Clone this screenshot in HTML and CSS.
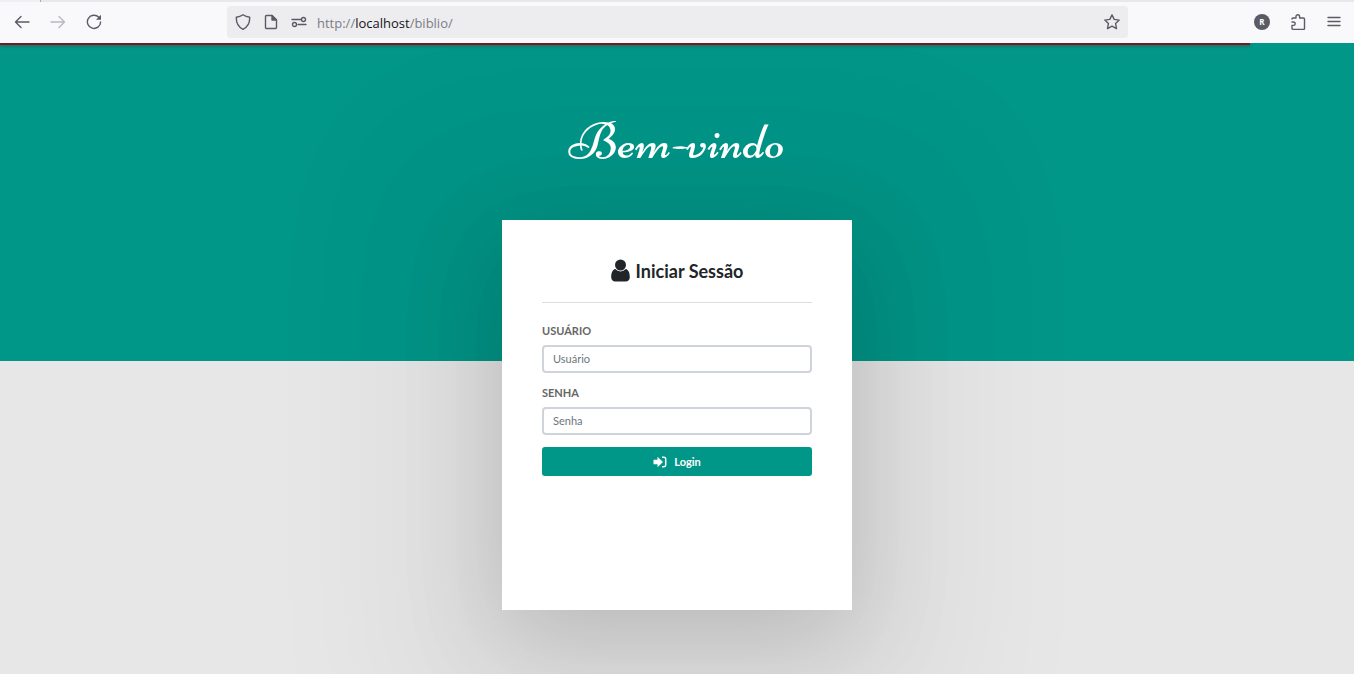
FILE: index.html
```html
<!DOCTYPE html>
<html lang="pt">
<head>
  <meta charset="UTF-8">
  <meta name="viewport" content="width=device-width, initial-scale=1">
  <title>Biblio - Login</title>
  <link rel="stylesheet" href="styles.css">
</head>
<body>
  <header class="browser">
    <div class="tab-edge"></div>
    <div class="toolbar">
      <nav class="nav-buttons">
        <button type="button" aria-label="Voltar">
          <svg viewBox="0 0 16 16"><path d="M15 8H1.5M7 2.5L1.5 8L7 13.5"/></svg>
        </button>
        <button type="button" class="off" aria-label="Avançar">
          <svg viewBox="0 0 16 16"><path d="M1 8h13.500M9 2.500L14.500 8L9 13.500"/></svg>
        </button>
        <button type="button" aria-label="Recarregar">
          <svg viewBox="0 0 16 16"><path d="M12.800 3.300A6.600 6.600 0 1 0 14.600 8"/><path class="tip" d="M15 .8v5h-5z"/></svg>
        </button>
      </nav>
      <div class="url-bar">
        <svg viewBox="0 0 16 16"><path d="M8 .8C6.300 2 3.900 3 1.300 3.300C1.100 8.500 3 13 8 15.300C13 13 14.900 8.500 14.700 3.300C12.100 3 9.700 2 8 .8z"/></svg>
        <svg viewBox="0 0 16 16"><path d="M3.500 1.500H9L13.500 6v7.500a1 1 0 0 1-1 1h-9a1 1 0 0 1-1-1v-11a1 1 0 0 1 1-1z"/><path class="fill" d="M9 1.500V6h4.500z"/></svg>
        <svg viewBox="0 0 16 16"><path d="M1 5.500h9M7 10.500h8"/><circle cx="12.500" cy="5.500" r="2"/><circle cx="3.500" cy="10.500" r="2"/></svg>
        <span class="url">http://<b>localhost</b>/biblio/</span>
        <svg class="star" viewBox="0 0 16 16"><path d="M8 .9l2.200 4.500l5 .7l-3.600 3.500l.9 5L8 12.200l-4.500 2.400l.9-5L.8 6.100l5-.7z"/></svg>
      </div>
      <div class="tools">
        <span class="account">R</span>
        <button type="button" aria-label="Extensões">
          <svg viewBox="0 0 16 16"><path d="M2 5a1 1 0 0 1 1-1h3V2.600a1.800 1.800 0 0 1 3.600 0V4h3.900a1 1 0 0 1 1 1v9.400a1 1 0 0 1-1 1H3a1 1 0 0 1-1-1v-3h1.500a1.700 1.700 0 0 0 0-3.400H2"/></svg>
        </button>
        <button type="button" aria-label="Menu">
          <svg viewBox="0 0 16 16"><path d="M2 3.500h12M2 7.500h12M2 11.500h12"/></svg>
        </button>
      </div>
    </div>
  </header>

  <main class="login-content">
    <div class="progress"></div>
    <h1 class="logo">Bem-vindo</h1>
    <div class="login-box">
      <form class="login-form">
        <h3 class="login-head">
          <svg viewBox="0 0 19 23"><circle cx="9.500" cy="6" r="5.500"/><path d="M4.300 10C1.500 10.500 .2 14 .2 18C.2 20.800 1.800 22.500 4.300 22.500h10.400c2.500 0 4.100-1.700 4.100-4.500c0-4-1.300-7.500-4.100-8a6.800 6.800 0 0 1-10.400 0z"/></svg>
          Iniciar Sessão
        </h3>
        <label for="usuario">USUÁRIO</label>
        <input type="text" id="usuario" placeholder="Usuário">
        <label for="senha">SENHA</label>
        <input type="password" id="senha" placeholder="Senha">
        <button type="submit" class="btn">
          <svg viewBox="0 0 14 12"><path d="M.5 3.800h4V.8L10 6l-5.500 5.200v-3h-4z"/><path class="door" d="M9 1.200h2a1.700 1.700 0 0 1 1.700 1.700v6.200a1.700 1.700 0 0 1-1.700 1.700H9"/></svg>
          Login
        </button>
      </form>
    </div>
  </main>
</body>
</html>
```

FILE: styles.css
```css
* {
  box-sizing: border-box;
}
body {
  margin: 0;
  min-height: 100vh;
  display: flex;
  flex-direction: column;
  font-family: Lato, sans-serif;
  color: #212529;
}
button {
  font-family: inherit;
  border: 0;
  cursor: pointer;
}

/* browser bar */
.browser {
  background: #f9f9fb;
}
.tab-edge {
  height: 2px;
  background: linear-gradient(90deg, #f0f0f4 40px, #aaa 40px, #aaa 41px, #e8e8eb 41px);
}
.toolbar {
  display: flex;
  align-items: center;
  height: 41px;
  padding: 0 12px 1px 14px;
}
.toolbar svg {
  display: block;
  width: 16px;
  height: 16px;
  fill: none;
  stroke: #5b5b66;
  stroke-width: 1.4;
  stroke-linejoin: round;
  stroke-linecap: round;
}
.toolbar svg .fill,
.toolbar svg .tip {
  fill: #5b5b66;
}
.toolbar svg .tip {
  stroke: none;
}
.toolbar button {
  padding: 0;
  background: none;
}
.nav-buttons {
  display: flex;
  gap: 20px;
}
.nav-buttons .off {
  opacity: 0.4;
}
.url-bar {
  flex: 1;
  display: flex;
  align-items: center;
  gap: 12px;
  height: 32px;
  margin: 0 126px 0 125px;
  padding: 0 8px;
  background: #ededf0;
  border-radius: 4px;
}
.url {
  font: 13px/20px "Open Sans", sans-serif;
  color: #7c7c85;
  margin-left: -2px;
  padding-top: 1px;
}
.url b {
  font-weight: normal;
  color: #15141a;
}
.star {
  margin-left: auto;
}
.tools {
  display: flex;
  align-items: center;
  gap: 20px;
}
.account {
  width: 16px;
  height: 16px;
  border-radius: 50%;
  background: #5b5b66;
  color: #fff;
  font: bold 8px/16px "Open Sans", sans-serif;
  text-align: center;
}

/* login page */
.login-content {
  position: relative;
  flex: 1;
  display: flex;
  flex-direction: column;
  align-items: center;
  overflow: hidden;
  padding: 66px 16px 64px;
  background: linear-gradient(#009688 318px, #e7e7e7 318px);
}
.progress {
  position: absolute;
  top: 0;
  left: 0;
  width: 92.3%;
  height: 2px;
  background: #701c22;
  box-shadow: 0 1px 3px rgba(112, 28, 34, 0.5);
}
.logo {
  z-index: 1;
  margin: 0 0 45px;
  font: 400 52px/66px Niconne, "Liberation Serif", serif;
  color: #fff;
}
.login-box {
  width: 100%;
  max-width: 350px;
  min-height: 390px;
  padding: 39px 40px;
  background: #fff;
  box-shadow: 0 29px 148px 102px rgba(0, 0, 0, 0.05), 0 29px 95px 0 rgba(0, 0, 0, 0.16);
}
.login-form {
  display: flex;
  flex-direction: column;
}
.login-head {
  display: flex;
  align-items: center;
  justify-content: center;
  gap: 6px;
  margin: 0 0 20px;
  padding-bottom: 20px;
  border-bottom: 1px solid #ddd;
  font-size: 18px;
  line-height: 22px;
}
.login-head svg {
  width: 19px;
  height: 23px;
  fill: #212529;
}
.login-form label {
  margin-bottom: 6px;
  font-size: 11px;
  line-height: 16px;
  font-weight: bold;
  color: #666;
}
.login-form input {
  width: 100%;
  height: 28px;
  margin-bottom: 12px;
  padding: 0 9px 1px;
  border: 2px solid #ced4da;
  border-radius: 4px;
  font: 11px Lato, sans-serif;
  color: #495057;
}
.login-form input::placeholder {
  color: #6c757d;
}
.btn {
  display: flex;
  align-items: center;
  justify-content: center;
  gap: 7px;
  height: 29px;
  border-radius: 3px;
  background: #009688;
  color: #fff;
  font-size: 11px;
  font-weight: bold;
}
.btn svg {
  width: 14px;
  height: 12px;
  fill: #fff;
}
.btn .door {
  fill: none;
  stroke: #fff;
  stroke-width: 1.5;
}
```
